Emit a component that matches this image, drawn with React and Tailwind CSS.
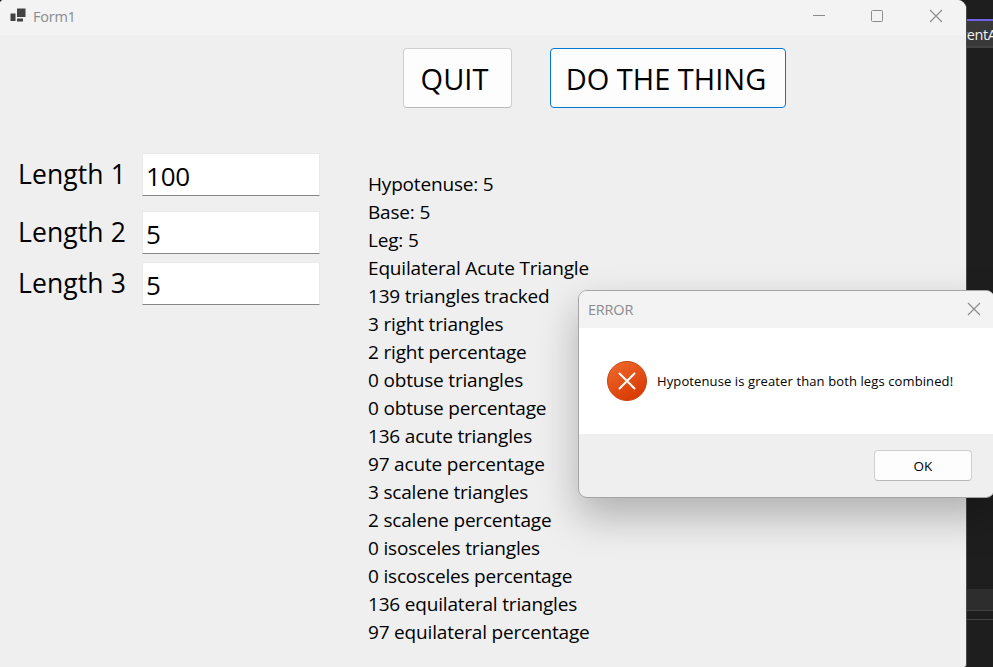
const RESULTS = [
  "Hypotenuse: 5",
  "Base: 5",
  "Leg: 5",
  "Equilateral Acute Triangle",
  "139 triangles tracked",
  "3 right triangles",
  "2 right percentage",
  "0 obtuse triangles",
  "0 obtuse percentage",
  "136 acute triangles",
  "97 acute percentage",
  "3 scalene triangles",
  "2 scalene percentage",
  "0 isosceles triangles",
  "0 iscosceles percentage",
  "136 equilateral triangles",
  "97 equilateral percentage",
];

function CloseIcon() {
  return (
    <svg className="size-[14px] shrink-0" viewBox="0 0 14 14" fill="none" stroke="#8b8b8b" strokeWidth="1.1">
      <path d="M1 1l12 12M13 1L1 13" />
    </svg>
  );
}

function Field({ label, value, className }) {
  return (
    <div className={`flex h-[43px] ${className}`}>
      <label className="w-[124px] shrink-0 whitespace-nowrap text-[26.5px] leading-[42px] tracking-[0.1px]">{label}</label>
      <div className="h-[43px] w-[177.5px] border border-[#e9e9e9] border-b-[#868686] bg-white pl-[3px] text-[26px] leading-[44px] tracking-[-0.2px]">
        {value}
      </div>
    </div>
  );
}

function EditorBackdrop() {
  return (
    <div className="flex h-[667px] flex-col items-end bg-[#1e1e1e]">
      <div className="mt-[19px] h-[29px] w-[27px] overflow-hidden border-t-2 border-b-2 border-t-[#7160e8] border-b-[#424242] bg-[#383838] text-[14.5px] leading-[27px] text-[#f0f0f0]">
        <span className="-ml-[6px] whitespace-nowrap tracking-[-0.4px]">ventA</span>
      </div>
      <div className="mt-[541px] h-[22px] w-[27px] border-b border-[#424242] bg-[#2d2d2d]" />
      <div className="mt-[8px] h-px w-[27px] bg-[#424242]" />
    </div>
  );
}

function FormWindow() {
  return (
    <section className="absolute top-0 left-0 flex h-[667px] w-[967px] flex-col overflow-hidden rounded-[4px_9px_3px_0] border-r border-[#4a4a4a] bg-[#efefef]">
      <header className="flex h-[35px] shrink-0 items-center bg-[#f3f3f3] pb-[3px] pl-[10px] text-[#8b8b8b]">
        <svg className="size-4" viewBox="0 0 16 16" fill="#424242">
          <path d="M7 .5h8.500v8.500H7zM.5 5.500h5v7.500h-5zM7 10.500h6v3H7z" />
        </svg>
        <span className="ml-[7px] pt-px text-[14.5px] tracking-[-0.25px]">Form1</span>
        <div className="mr-[23px] ml-auto flex items-center">
          <svg className="h-3 w-3" viewBox="0 0 12 12" stroke="#8b8b8b"><path d="M0 5.500h12" /></svg>
          <svg className="ml-[46px] h-3 w-3" viewBox="0 0 12 12" fill="none" stroke="#8b8b8b"><rect x=".5" y=".5" width="11" height="11" rx="1" /></svg>
          <span className="ml-[46px]"><CloseIcon /></span>
        </div>
      </header>
      <div className="flex pt-[13px] pl-[403px] text-[29px]">
        <button className="h-[60px] w-[109px] rounded-[4px] border border-[#cfcfcf] border-b-[#b9b9b9] bg-[#fdfdfd] pt-[2px] pr-[6px] whitespace-nowrap">QUIT</button>
        <button className="ml-[38px] h-[60px] w-[236px] rounded-[4px] border border-[#0078d4] bg-[#fdfdfd] pt-[2px] pr-[4px] whitespace-nowrap">DO THE THING</button>
      </div>
      <div className="flex">
        <div className="w-[368px] shrink-0 pt-[45px] pl-[18px]">
          <Field label="Length 1" value="100" className="" />
          <Field label="Length 2" value="5" className="mt-[15px]" />
          <Field label="Length 3" value="5" className="mt-[8px]" />
        </div>
        <ul className="pt-[62px] text-[19px] leading-[28px] tracking-[-0.18px]">
          {RESULTS.map((line) => (
            <li key={line}>{line}</li>
          ))}
        </ul>
      </div>
    </section>
  );
}

function ErrorDialog() {
  return (
    <section className="absolute top-[290px] left-[578px] flex h-[208px] w-[417px] flex-col overflow-hidden rounded-[9px] border border-[#a5a5a5] bg-[#efefef] shadow-[0_18px_40px_0px_rgba(0,0,0,0.27)]">
      <header className="flex h-[37px] items-center justify-between bg-[#f3f3f3] pr-[13px] pl-[9px] text-[14.5px] text-[#8b8b8b]">
        <span className="tracking-[-0.2px]">ERROR</span>
        <span className="pb-[2px]"><CloseIcon /></span>
      </header>
      <div className="flex h-[106px] items-center bg-white pl-[28px]">
        <svg className="size-10 shrink-0" viewBox="0 0 40 40">
          <defs>
            <linearGradient id="errorFill" x1="0.2" y1="0" x2="0.8" y2="1">
              <stop offset="0" stopColor="#ee682b" />
              <stop offset="1" stopColor="#d63600" />
            </linearGradient>
          </defs>
          <circle cx="20" cy="20" r="19.500" fill="url(#errorFill)" stroke="#c94510" strokeWidth="1" />
          <path d="M12.500 12.500l15 15M27.500 12.500l-15 15" stroke="#fff" strokeWidth="2" strokeLinecap="round" />
        </svg>
        <span className="ml-[10px] pt-[2px] whitespace-nowrap text-[13px] tracking-[0.11px]">Hypotenuse is greater than both legs combined!</span>
      </div>
      <footer className="flex justify-end pt-[16px] pr-[22px]">
        <button className="h-[31px] w-[98px] rounded-[4px] border border-[#cfcfcf] border-b-[#b9b9b9] bg-[#fdfdfd] pt-[2px] text-[13.5px]">OK</button>
      </footer>
    </section>
  );
}

export default function App() {
  return (
    <main className="relative h-[667px] w-[993px] overflow-hidden font-['Open_Sans','Noto_Sans',sans-serif] text-black">
      <EditorBackdrop />
      <FormWindow />
      <ErrorDialog />
    </main>
  );
}
